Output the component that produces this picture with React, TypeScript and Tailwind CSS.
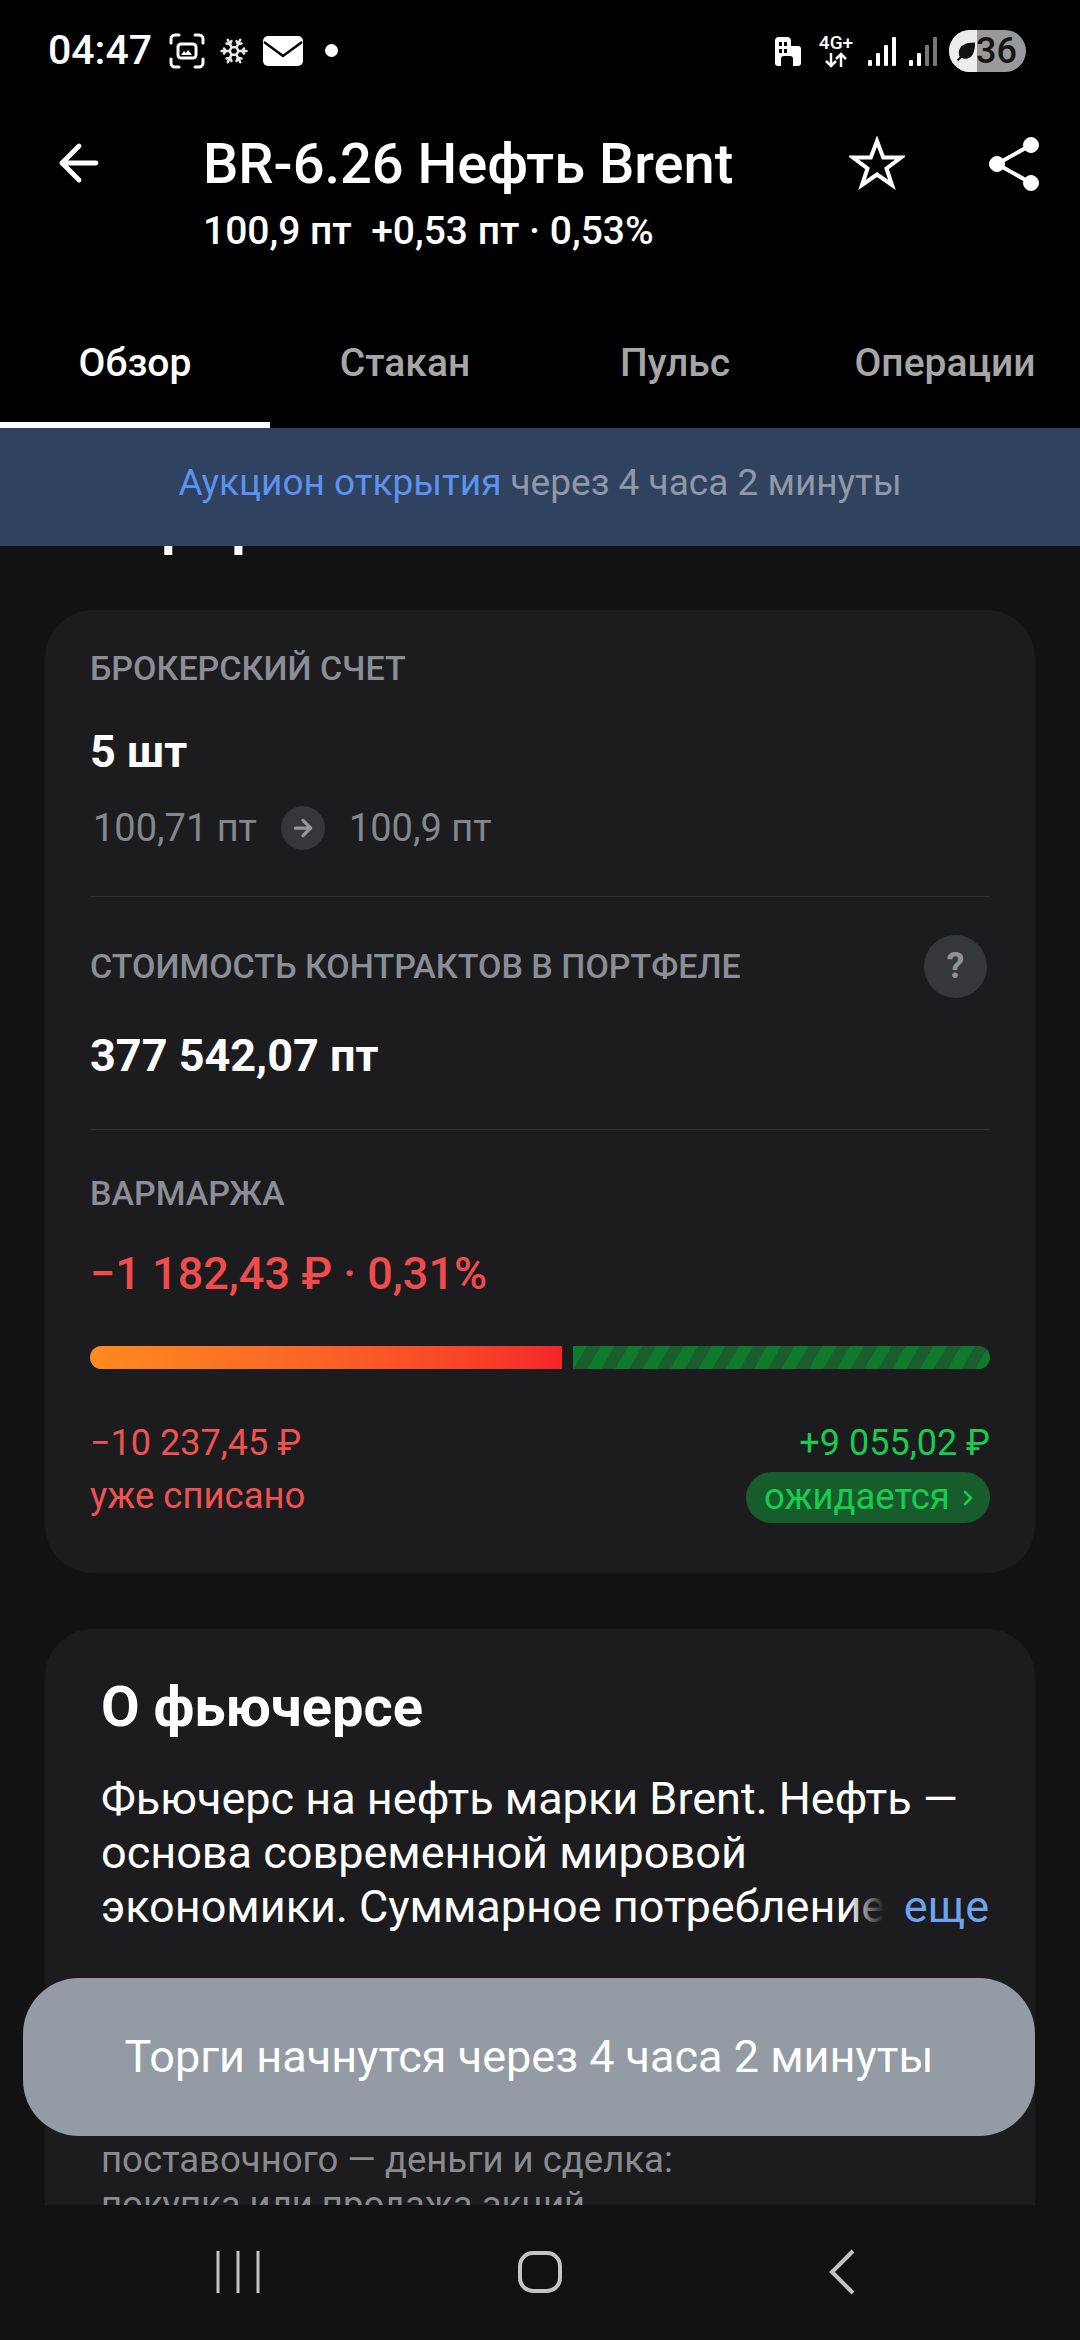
import { ArrowLeft, ArrowRight, ChevronRight, Snowflake } from "lucide-react";

const tabs = ["Обзор", "Стакан", "Пульс", "Операции"];

function StatusBar() {
  return (
    <div className="flex h-[100px] items-center justify-between pl-[48px] pr-[54px] pt-[1px] text-white">
      <div className="flex items-center">
        <span className="text-[41px] leading-none font-medium">04:47</span>
        <svg className="ml-[17px]" width="36" height="36" viewBox="0 0 36 36" fill="none" stroke="white" strokeWidth="3" strokeLinecap="round">
          <path d="M2 10V6a4 4 0 0 1 4-4h4M26 2h4a4 4 0 0 1 4 4v4M34 26v4a4 4 0 0 1-4 4h-4M10 34H6a4 4 0 0 1-4-4v-4" />
          <rect x="9" y="11" width="18" height="14" rx="3" />
          <path d="M12 22l3-4 2 2 2-3 4 5z" fill="white" stroke="none" />
        </svg>
        <Snowflake className="ml-[14px]" size={30} strokeWidth={2} color="#e8e8e8" />
        <svg className="ml-[14px]" width="40" height="30" viewBox="0 0 40 30">
          <rect width="40" height="30" rx="5" fill="white" />
          <path d="M1 6l19 14L39 6" fill="none" stroke="black" strokeWidth="2.5" />
        </svg>
        <span className="ml-[22px] size-[13px] rounded-full bg-white" />
      </div>
      <div className="flex items-center">
        <svg width="30" height="30" viewBox="0 0 30 30" fill="white">
          <path d="M3 5a4 4 0 0 1 4-4h8a4 4 0 0 1 4 4v5h7a3 3 0 0 1 3 3v14a3 3 0 0 1-3 3h-5v-7a3 3 0 0 0-3-3h-6a3 3 0 0 0-3 3v7H6a3 3 0 0 1-3-3z" />
          <rect x="7" y="6" width="3" height="4" fill="black" />
          <rect x="12" y="6" width="3" height="4" fill="black" />
          <rect x="7" y="13" width="3" height="4" fill="black" />
          <rect x="12" y="13" width="3" height="4" fill="black" />
        </svg>
        <div className="ml-[17px] flex w-[34px] flex-col items-center">
          <span className="text-[19px] leading-[18px] font-medium whitespace-nowrap">4G+</span>
          <svg width="26" height="16" viewBox="0 0 26 16" fill="none" stroke="white" strokeWidth="2.5">
            <path d="M8 1v13M3 9l5 5 5-5M18 15V2M13 7l5-5 5 5" />
          </svg>
        </div>
        <svg className="ml-[14px]" width="30" height="30" viewBox="0 0 30 30" fill="white">
          <rect x="1" y="24" width="4" height="6" rx="1" />
          <rect x="9" y="17" width="4" height="13" rx="1" />
          <rect x="17" y="9" width="4" height="21" rx="1" />
          <rect x="25" y="1" width="4" height="29" rx="1" />
        </svg>
        <svg className="ml-[11px]" width="30" height="30" viewBox="0 0 30 30" fill="white">
          <rect x="1" y="24" width="4" height="6" rx="1" />
          <rect x="9" y="17" width="4" height="13" rx="1" />
          <rect x="17" y="9" width="4" height="21" rx="1" fill="#777" />
          <rect x="25" y="1" width="4" height="29" rx="1" fill="#777" />
        </svg>
        <div className="relative ml-[11px] flex h-[42px] w-[77px] items-center justify-end overflow-hidden rounded-full bg-[#999999] pr-[9px]">
          <div className="absolute inset-y-0 left-0 flex w-[28px] items-center justify-center bg-[#ececec] pl-[5px]">
            <svg width="24" height="24" viewBox="0 0 24 24" fill="#111">
              <path d="M22 3C12 3 5 6 5 14c0 2 .5 3 1 4L3 21l1.500 1.500L8 19c1 .5 2 1 4 1 7 0 10-7 10-17z" />
            </svg>
          </div>
          <span className="text-[36px] leading-none font-medium text-[#151515]">36</span>
        </div>
      </div>
    </div>
  );
}

function Header() {
  return (
    <div className="relative h-[170px] pt-[34px] pl-[203px] text-white">
      <ArrowLeft className="absolute top-[34px] left-[50px]" size={58} strokeWidth={2} />
      <div className="text-[56px] leading-[60px] font-medium">BR-6.26 Нефть Brent</div>
      <div className="mt-[16px] text-[39px] leading-[42px] font-medium whitespace-pre">100,9 пт  +0,53 пт · 0,53%</div>
      <svg className="absolute top-[36px] left-[849px]" width="56" height="54" viewBox="0 0 56 54" fill="none" stroke="white" strokeWidth="4" strokeLinejoin="miter">
        <path d="M28 5l6.200 16.500H52L37.500 32.500 43 49 28 38.500 13 49l5.500-16.500L4 21.500h17.800z" />
      </svg>
      <svg className="absolute top-[33px] left-[985px]" width="58" height="62" viewBox="0 0 58 62" fill="white" stroke="white">
        <path d="M46 12L12 31l34 19" fill="none" strokeWidth="4" />
        <circle cx="46" cy="12" r="7.500" />
        <circle cx="12" cy="31" r="7.500" />
        <circle cx="46" cy="50" r="7.500" />
      </svg>
    </div>
  );
}

function Tabs() {
  return (
    <div className="grid h-[158px] grid-cols-4">
      {tabs.map((tab, i) => (
        <div
          key={tab}
          className={
            i === 0
              ? "flex items-start justify-center border-b-[6px] border-white pt-[72px] text-[39px] leading-[42px] font-medium text-white"
              : "flex items-start justify-center pt-[72px] text-[39px] leading-[42px] font-medium text-[#a6a6a6]"
          }
        >
          {tab}
        </div>
      ))}
    </div>
  );
}

function Divider() {
  return <div className="h-[1px] bg-[#303135]" />;
}

function Label({ children }: { children: string }) {
  return <div className="text-[34px] leading-[38px] font-medium text-[#8b8e96]">{children}</div>;
}

function PositionCard() {
  return (
    <div className="mx-[45px] mt-[55px] h-[963px] rounded-[48px] bg-[#1c1c1e] px-[45px] pt-[39px]">
      <Label>БРОКЕРСКИЙ СЧЕТ</Label>
      <div className="mt-[40px] text-[45px] leading-[50px] font-bold text-white">5 шт</div>
      <div className="mt-[29px] flex h-[44px] items-center pl-[3px] text-[38px] text-[#84878d]">
        <span>100,71 пт</span>
        <span className="mx-[24px] flex size-[44px] items-center justify-center rounded-full bg-[#36373a]">
          <ArrowRight size={26} strokeWidth={3} color="#95979c" />
        </span>
        <span>100,9 пт</span>
      </div>
      <div className="mt-[46px]">
        <Divider />
      </div>
      <div className="mt-[37px] flex h-[64px] items-center justify-between">
        <Label>СТОИМОСТЬ КОНТРАКТОВ В ПОРТФЕЛЕ</Label>
        <span className="mr-[3px] flex size-[63px] items-center justify-center rounded-full bg-[#36373a] text-[36px] font-bold text-[#909297]">?</span>
      </div>
      <div className="mt-[33px] text-[45px] leading-[50px] font-bold text-white">377 542,07 пт</div>
      <div className="mt-[48px]">
        <Divider />
      </div>
      <div className="mt-[44px]">
        <Label>ВАРМАРЖА</Label>
      </div>
      <div className="mt-[37px] text-[45px] leading-[50px] font-medium text-[#f04c4c]">−1 182,43 ₽ · 0,31%</div>
      <div className="mt-[47px] flex h-[23px] gap-[11px]">
        <div className="w-[472px] rounded-l-full bg-gradient-to-r from-[#ff8a1e] to-[#f52528]" />
        <div className="flex-1 rounded-r-full bg-[repeating-linear-gradient(120deg,#0f7a2c_0px,#0f7a2c_12px,#1b5e2d_12px,#1b5e2d_24px)]" />
      </div>
      <div className="mt-[51px] flex justify-between">
        <div className="text-[#ee5252]">
          <div className="text-[36px] leading-[46px]">−10 237,45 ₽</div>
          <div className="mt-[7px] text-[36.500px] leading-[46px]">уже списано</div>
        </div>
        <div className="flex flex-col items-end text-[#19cc4f]">
          <div className="text-[36px] leading-[46px]">+9 055,02 ₽</div>
          <div className="mt-[6px] flex h-[51px] w-[244px] items-center justify-between rounded-full bg-[#175c2b] pr-[10px] pl-[18px]">
            <span className="text-[36.500px]">ожидается</span>
            <ChevronRight size={24} strokeWidth={2.5} />
          </div>
        </div>
      </div>
    </div>
  );
}

function AboutCard() {
  return (
    <div className="mx-[45px] mt-[56px] h-[700px] rounded-t-[48px] bg-[#1c1c1e] px-[56px] pt-[48px]">
      <div className="text-[56px] leading-[60px] font-bold text-white">О фьючерсе</div>
      <div className="mt-[35px] text-[45px] leading-[54px] text-white">
        <div>Фьючерс на нефть марки Brent. Нефть —</div>
        <div>основа современной мировой</div>
        <div className="relative whitespace-nowrap">
          экономики. Суммарное потребление
          <div className="absolute top-0 right-[-10px] flex h-[54px] items-center">
            <div className="h-full w-[36px] bg-gradient-to-r from-transparent to-[#1c1c1e]" />
            <span className="bg-[#1c1c1e] pl-[20px] text-[#6ea3ee]">еще</span>
          </div>
        </div>
      </div>
      <div className="mt-[203px] text-[36.500px] leading-[45px] text-[#8a8b8e]">
        <div>поставочного — деньги и сделка:</div>
        <div>покупка или продажа акций</div>
      </div>
    </div>
  );
}

function NavBar() {
  return (
    <div className="flex h-[135px] items-start justify-center bg-[#111111] pt-[44px]">
      <div className="grid w-[906px] grid-cols-3 items-center justify-items-center">
        <svg width="44" height="44" viewBox="0 0 44 44" fill="none" stroke="#c4c4c4" strokeWidth="3">
          <path d="M2 1v42M22 1v42M42 1v42" />
        </svg>
        <svg width="44" height="44" viewBox="0 0 44 44" fill="none" stroke="#c4c4c4" strokeWidth="4">
          <rect x="2" y="3" width="40" height="38" rx="13" />
        </svg>
        <svg width="26" height="46" viewBox="0 0 26 46" fill="none" stroke="#c4c4c4" strokeWidth="4">
          <path d="M24 2L3 23l21 21" />
        </svg>
      </div>
    </div>
  );
}

export default function App() {
  return (
    <div className="relative flex h-[2340px] w-[1080px] flex-col overflow-hidden bg-black font-['Roboto',sans-serif]">
      <StatusBar />
      <Header />
      <Tabs />
      <div className="z-10 flex h-[118px] items-center justify-center bg-[#2f4260] pb-[8px] text-[37px]">
        <span className="text-[#5b93ee]">Аукцион открытия</span>
        <span className="ml-[9px] text-[#8f99a6]">через 4 часа 2 минуты</span>
      </div>

      <div className="h-0 flex-1 overflow-hidden bg-[#121212]">
        <div className="mt-[-51px] pl-[90px] text-[56px] leading-[60px] font-bold text-white">Портфель</div>
        <PositionCard />
        <AboutCard />
      </div>

      <NavBar />

      {/* toast */}
      <div className="absolute top-[1978px] left-[23px] flex h-[158px] w-[1012px] items-center justify-center rounded-[56px] bg-[#949ba5] text-[45px] text-white">
        Торги начнутся через 4 часа 2 минуты
      </div>
    </div>
  );
}
